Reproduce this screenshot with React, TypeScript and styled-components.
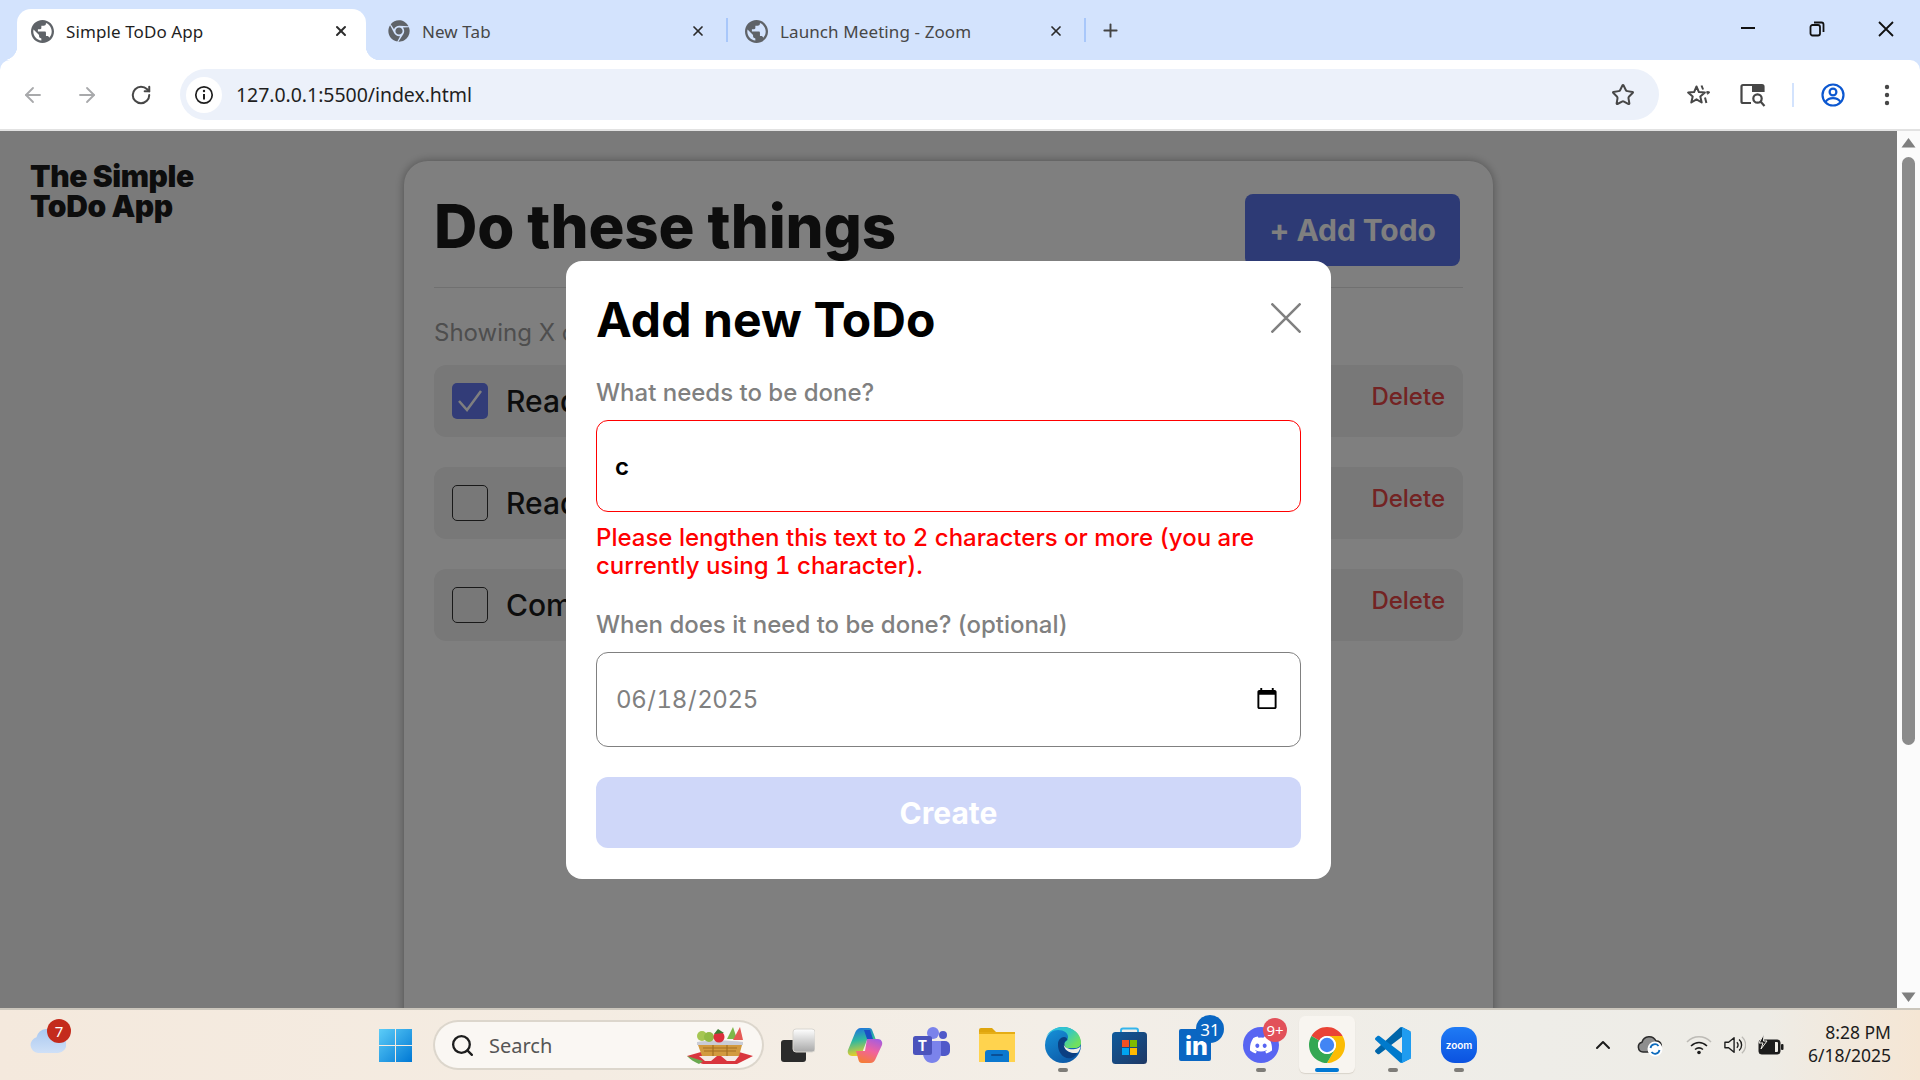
import React from "react";
import styled, { createGlobalStyle } from "styled-components";
import { ArrowLeft, ArrowRight, RotateCw, Star, X, Plus, Search as SearchGlass, ChevronUp } from "lucide-react";
import { FaChrome, FaDiscord } from "react-icons/fa";

const Global = createGlobalStyle`
  html, body { margin: 0; padding: 0; height: 100%; overflow: hidden; }
  * { box-sizing: border-box; }
  body { font-family: Inter, "Liberation Sans", sans-serif; background: #d3e3fd; }
`;

const Screen = styled.div`
  width: 1920px;
  height: 1080px;
  display: flex;
  flex-direction: column;
  overflow: hidden;
`;

/* ---------- browser chrome ---------- */
const TabStrip = styled.div`
  height: 60px;
  flex: none;
  display: flex;
  align-items: flex-end;
  padding-left: 17px;
  background: #d3e3fd;
  font-family: "Noto Sans", "Open Sans", sans-serif;
`;
const Tab = styled.div<{ $active?: boolean; $w: number; $l: number; $r: number }>`
  position: relative;
  flex: none;
  width: ${(p) => p.$w}px;
  height: 51px;
  display: flex;
  align-items: center;
  gap: 12px;
  padding: 0 ${(p) => p.$r}px 7px ${(p) => p.$l}px;
  background: ${(p) => (p.$active ? "#fff" : "transparent")};
  color: ${(p) => (p.$active ? "#1f1f1f" : "#474747")};
  border-radius: 14px 14px 0 0;
  ${(p) =>
    p.$active
      ? `
    &::before, &::after { content: ""; position: absolute; bottom: 0; width: 14px; height: 14px; }
    &::before { left: -14px; background: radial-gradient(circle at 0 0, transparent 14px, #fff 14.5px); }
    &::after { right: -14px; background: radial-gradient(circle at 100% 0, transparent 14px, #fff 14.5px); }
  `
      : ""}
`;
const TabTitle = styled.span`
  font-size: 17px;
  letter-spacing: 0.1px;
  white-space: nowrap;
`;
const TabClose = styled.span`
  margin-left: auto;
  display: flex;
  color: #2b2b2b;
`;
const TabSep = styled.div`
  flex: none;
  align-self: flex-start;
  margin-top: 18px;
  width: 2px;
  height: 24px;
  background: #a8c7fa;
`;
const NewTab = styled.div`
  flex: none;
  align-self: flex-start;
  width: 36px;
  height: 60px;
  margin-left: 6px;
  display: flex;
  align-items: center;
  justify-content: center;
  color: #444;
`;
const WinControls = styled.div`
  margin-left: auto;
  align-self: flex-start;
  display: flex;
`;
const WinButton = styled.div`
  width: 69px;
  height: 58px;
  display: flex;
  align-items: center;
  justify-content: center;
  color: #111;
`;
const Toolbar = styled.div`
  height: 71px;
  flex: none;
  display: flex;
  align-items: center;
  padding: 0 6px;
  background: #fff;
  border-bottom: 2px solid #e2e2e2;
  border-radius: 10px 10px 0 0;
`;
const ToolSlot = styled.div<{ $color?: string }>`
  flex: none;
  width: 54px;
  height: 51px;
  display: flex;
  align-items: center;
  justify-content: center;
  color: ${(p) => p.$color || "#474747"};
`;
const Omnibox = styled.div`
  flex: 1;
  height: 51px;
  margin: 0 13px 0 12px;
  display: flex;
  align-items: center;
  padding: 0 9px 0 6px;
  border-radius: 26px;
  background: #ecf1fa;
`;
const InfoBadge = styled.div`
  flex: none;
  width: 36px;
  height: 36px;
  border-radius: 50%;
  background: #fff;
  display: flex;
  align-items: center;
  justify-content: center;
`;
const Url = styled.span`
  margin-left: 14px;
  font-family: "Noto Sans", "Open Sans", sans-serif;
  font-size: 19.5px;
  letter-spacing: -0.05px;
  color: #1f1f1f;
`;
const OmniStar = styled.div`
  margin-left: auto;
  width: 54px;
  display: flex;
  justify-content: center;
  color: #474747;
`;
const ToolSep = styled.div`
  flex: none;
  width: 2px;
  height: 24px;
  margin: 0 12px;
  background: #d3e3fd;
`;

/* ---------- page ---------- */
const Viewport = styled.div`
  flex: 1;
  min-height: 0;
  display: flex;
  background: #fbfbfb;
`;
const Page = styled.div`
  position: relative;
  flex: 1;
  min-width: 0;
  display: flex;
  overflow: hidden;
  background: #f5f5f5;
`;
const Sidebar = styled.div`
  flex: none;
  width: 404px;
  padding: 30px 0 0 30px;
`;
const Logo = styled.div`
  font-size: 30px;
  line-height: 30px;
  font-weight: 900;
  letter-spacing: -0.4px;
  color: #1a1a1a;
`;
const Card = styled.div`
  flex: none;
  width: 1089px;
  height: 1000px;
  margin-top: 30px;
  padding: 33px 30px 0;
  background: #fff;
  border-radius: 24px;
  box-shadow: 0 0 10px rgba(0, 0, 0, 0.35);
`;
const CardHead = styled.div`
  display: flex;
  align-items: flex-start;
  justify-content: space-between;
  padding: 0 3px 21px 0;
  border-bottom: 1px solid #e0e0e0;
`;
const Heading = styled.h1`
  margin: -4px 0 0;
  font-size: 60px;
  line-height: 72px;
  font-weight: 800;
  letter-spacing: -0.1px;
  color: #1a1a1a;
`;
const AddButton = styled.button`
  height: 72px;
  width: 215px;
  border: 0;
  border-radius: 8px;
  background: #5a74ea;
  color: #fff;
  font: 700 30px Inter, sans-serif;
  letter-spacing: -0.1px;
`;
const Showing = styled.div`
  margin-top: 30px;
  font-size: 24px;
  line-height: 29px;
  color: #9c9c9c;
`;
const TodoList = styled.div`
  margin-top: 18px;
  display: flex;
  flex-direction: column;
  gap: 30px;
`;
const TodoRow = styled.div`
  height: 72px;
  display: flex;
  align-items: center;
  gap: 18px;
  padding: 0 18px;
  border-radius: 12px;
  background: #f0f0f0;
`;
const Check = styled.span<{ $checked?: boolean }>`
  flex: none;
  width: 36px;
  height: 36px;
  display: flex;
  align-items: center;
  justify-content: center;
  border-radius: 5px;
  border: ${(p) => (p.$checked ? "0" : "1.5px solid #333")};
  background: ${(p) => (p.$checked ? "#6478f0" : "transparent")};
  color: #fff;
`;
const TodoText = styled.span`
  font-size: 30px;
  font-weight: 500;
  color: #1a1a1a;
`;
const DeleteBtn = styled.span`
  margin-left: auto;
  margin-bottom: 10px;
  font-size: 24px;
  font-weight: 500;
  color: #e64646;
`;
const Overlay = styled.div`
  position: absolute;
  inset: 0;
  display: flex;
  align-items: center;
  justify-content: center;
  background: rgba(0, 0, 0, 0.5);
`;
const Modal = styled.div`
  width: 765px;
  height: 618px;
  padding: 30px;
  background: #fff;
  border-radius: 16px;
  display: flex;
  flex-direction: column;
`;
const ModalHead = styled.div`
  display: flex;
  align-items: flex-start;
  justify-content: space-between;
  height: 58px;
`;
const ModalTitle = styled.h2`
  margin: 0;
  font-size: 48px;
  line-height: 58px;
  font-weight: 700;
  letter-spacing: 0.1px;
  color: #000;
`;
const CloseIcon = styled.span`
  display: flex;
  margin-top: 12px;
`;
const FieldLabel = styled.label<{ $top: number }>`
  display: block;
  margin-top: ${(p) => p.$top}px;
  font-size: 24px;
  line-height: 29px;
  font-weight: 500;
  color: #808080;
`;
const TextField = styled.input`
  display: block;
  width: 100%;
  height: 93px;
  margin-top: 13px;
  padding: 1px 18px 0;
  border: 1px solid #f00;
  border-radius: 12px;
  outline: 0;
  background: #fff;
  font: 600 24px Inter, sans-serif;
  color: #000;
`;
const ErrorText = styled.div`
  margin-top: 12px;
  font-size: 24px;
  line-height: 28px;
  font-weight: 500;
  font-variant-numeric: tabular-nums;
  color: #f00;
`;
const DateField = styled.input`
  display: block;
  width: 100%;
  height: 95px;
  margin-top: 13px;
  padding: 0 19px 0 18px;
  border: 1px solid #808080;
  border-radius: 12px;
  outline: 0;
  background: #fff;
  font: 400 24px Inter, sans-serif;
  font-variant-numeric: tabular-nums;
  letter-spacing: -0.4px;
  color: #808080;
`;
const CreateBtn = styled.button`
  display: block;
  width: 100%;
  height: 72px;
  margin-top: 30px;
  border: 0;
  border-radius: 12px;
  background: #cfd7f9;
  color: #fff;
  font: 700 30px Inter, sans-serif;
`;
const Scrollbar = styled.div`
  flex: none;
  width: 23px;
  display: flex;
  flex-direction: column;
  align-items: center;
  padding: 6px 0 5px;
  background: #fbfbfb;
`;
const Thumb = styled.div`
  width: 13px;
  height: 588px;
  margin-top: 9px;
  border-radius: 7px;
  background: #8b8b8b;
`;
const ArrowDown = styled.span`
  display: flex;
  margin-top: auto;
`;
const ArrowUp = styled.span`
  display: flex;
`;

/* ---------- taskbar ---------- */
const Taskbar = styled.div`
  height: 72px;
  flex: none;
  display: flex;
  align-items: center;
  border-top: 2px solid #cbc6bc;
  background: linear-gradient(90deg, #f4e9dd 0%, #f4ece2 30%, #f3eee7 55%, #eeede8 80%, #eeece6 92%, #f5e6d4 100%);
`;
const WeatherArea = styled.div`
  flex: none;
  width: 362px;
  padding: 0 0 8px 30px;
`;
const Weather = styled.div`
  position: relative;
  width: 36px;
  height: 24px;
`;
const WeatherBadge = styled.span`
  position: absolute;
  top: -10px;
  left: 17px;
  width: 24px;
  height: 24px;
  border-radius: 50%;
  background: #c42b1c;
  color: #fff;
  font: 400 15px "Noto Sans", sans-serif;
  display: flex;
  align-items: center;
  justify-content: center;
`;
const TaskSlot = styled.div`
  position: relative;
  flex: none;
  width: 66px;
  height: 70px;
  display: flex;
  align-items: center;
  justify-content: center;
`;
const TaskViewSlot = styled(TaskSlot)`
  margin-right: 2px;
`;
const ActiveBg = styled.span`
  position: absolute;
  left: 5px;
  right: 5px;
  top: 6px;
  bottom: 7px;
  border-radius: 6px;
  background: #f8f5f0;
  box-shadow: 0 1px 1px #d8d3ca;
`;
const ActiveIcon = styled.span`
  position: relative;
  display: flex;
`;
const Indicator = styled.span<{ $active?: boolean }>`
  position: absolute;
  bottom: 8px;
  left: 50%;
  transform: translateX(-50%);
  width: ${(p) => (p.$active ? 24 : 10)}px;
  height: 4px;
  border-radius: 2px;
  background: ${(p) => (p.$active ? "#0078d4" : "#7e7c78")};
`;
const CountBadge = styled.span<{ $bg: string; $size: number; $top: number; $left: number; $font: number }>`
  position: absolute;
  top: ${(p) => p.$top}px;
  left: ${(p) => p.$left}px;
  width: ${(p) => p.$size}px;
  height: ${(p) => p.$size}px;
  border-radius: 50%;
  background: ${(p) => p.$bg};
  color: #fff;
  font: 400 ${(p) => p.$font}px "Noto Sans", sans-serif;
  display: flex;
  align-items: center;
  justify-content: center;
`;
const SearchBox = styled.div`
  flex: none;
  width: 327px;
  height: 46px;
  margin: 0 2px 0 7px;
  padding: 0 7px 0 15px;
  display: flex;
  align-items: center;
  border-radius: 23px;
  background: #faf7f3;
  box-shadow: 0 0 0 2px #dcd6cc;
  color: #1c1c1c;
`;
const SearchText = styled.span`
  margin-left: 14px;
  font: 400 20px "Noto Sans", sans-serif;
  color: #555;
`;
const Basket = styled.span`
  margin-left: auto;
  display: flex;
`;
const TrayArea = styled.div`
  margin-left: auto;
  display: flex;
  align-items: center;
  height: 70px;
`;
const TraySlot = styled.div<{ $w: number }>`
  flex: none;
  width: ${(p) => p.$w}px;
  display: flex;
  justify-content: center;
  color: #1c1c1c;
`;
const Clock = styled.div`
  width: 124px;
  padding: 0 29px 2px 0;
  text-align: right;
  font: 400 17.5px/23px "Noto Sans", sans-serif;
  color: #1c1c1c;
`;

/* ---------- icons ---------- */
const Globe = () => (
  <svg width="23" height="23" viewBox="2 2 20 20" fill="#5f6368">
    <path d="M12 2C6.48 2 2 6.48 2 12s4.48 10 10 10 10-4.48 10-10S17.52 2 12 2zm-1 17.93c-3.95-.49-7-3.85-7-7.93 0-.62.08-1.21.21-1.79L9 15v1c0 1.1.9 2 2 2v1.93zm6.9-2.54c-.26-.81-1-1.39-1.9-1.39h-1v-3c0-.55-.45-1-1-1H8v-2h2c.55 0 1-.45 1-1V7h2c1.1 0 2-.9 2-2v-.41c2.93 1.19 5 4.06 5 7.41 0 2.08-.8 3.97-2.1 5.39z" />
  </svg>
);
const Info = () => (
  <svg width="20" height="20" viewBox="0 0 20 20" fill="none" stroke="#1f1f1f" strokeWidth="1.7">
    <circle cx="10" cy="10" r="8.2" />
    <path d="M10 9v5.5" strokeWidth="2" />
    <circle cx="10" cy="6" r="1.2" fill="#1f1f1f" stroke="none" />
  </svg>
);
const BookmarkStars = () => (
  <svg width="26" height="26" viewBox="0 0 26 26" fill="none" stroke="#474747" strokeWidth="2" strokeLinejoin="round">
    <path d="M10.5 4.5l2.4 5.6 6 .5-4.6 4 1.4 5.9-5.2-3.2-5.2 3.2 1.4-5.9-4.6-4 6-.5z" />
    <path d="M15.5 3.5l1.6 4M21 12l2-1.7-2.6-.3M19 15.5l1.4 5.5" />
  </svg>
);
const TabSearch = () => (
  <svg width="28" height="26" viewBox="0 0 28 26" fill="none" stroke="#474747" strokeWidth="2.2">
    <path d="M12 21H4a1.5 1.5 0 0 1-1.5-1.5v-15A1.5 1.5 0 0 1 4 3h19a1.5 1.5 0 0 1 1.5 1.5V10" />
    <rect x="13" y="3" width="11.5" height="7" fill="#474747" stroke="none" />
    <circle cx="18.5" cy="16.5" r="4.2" />
    <path d="M21.5 19.5l4 4.5" />
  </svg>
);
const Profile = () => (
  <svg width="24" height="26" viewBox="0 0 24 26" fill="none" stroke="#0b57d0" strokeWidth="2.2">
    <circle cx="12" cy="13" r="10.5" />
    <circle cx="12" cy="10" r="3.4" />
    <path d="M4.5 20c2-3 5-3.8 7.5-3.8S17.500 17 19.500 20" />
  </svg>
);
const Dots = () => (
  <svg width="6" height="22" viewBox="0 0 6 22" fill="#474747">
    <circle cx="3" cy="3" r="2.2" />
    <circle cx="3" cy="11" r="2.2" />
    <circle cx="3" cy="19" r="2.2" />
  </svg>
);
const Minimize = () => (
  <svg width="16" height="16" viewBox="0 0 16 16"><path d="M1 7h14" stroke="#111" strokeWidth="2" /></svg>
);
const Restore = () => (
  <svg width="16" height="16" viewBox="0 0 16 16" fill="none" stroke="#111" strokeWidth="1.8">
    <rect x="1.500" y="4" width="9.500" height="10.500" rx="2" />
    <path d="M5 1.500h7.500a2 2 0 0 1 2 2V11" />
  </svg>
);
const WinClose = () => (
  <svg width="16" height="16" viewBox="0 0 16 16"><path d="M1 1l14 14M15 1L1 15" stroke="#111" strokeWidth="1.800" /></svg>
);
const Cloud = () => (
  <svg width="36" height="24" viewBox="0 0 36 24">
    <defs>
      <linearGradient id="wc" x1="0" y1="0" x2="0" y2="1">
        <stop offset="0" stopColor="#a9c8f0" />
        <stop offset="1" stopColor="#cfe0f7" />
      </linearGradient>
    </defs>
    <path d="M8 24a8 8 0 0 1-1.500-15.700A11 11 0 0 1 27 6a9 9 0 0 1 1 18z" fill="url(#wc)" />
  </svg>
);
const WinLogo = () => (
  <svg width="35" height="35" viewBox="0 0 35 35">
    <defs>
      <linearGradient id="wl" x1="0" y1="0" x2="1" y2="1">
        <stop offset="0" stopColor="#5ccdf8" />
        <stop offset="1" stopColor="#0078d4" />
      </linearGradient>
    </defs>
    <path d="M1 1h16v16H1zM18 1h16v16H18zM1 18h16v16H1zM18 18h16v16H18z" fill="url(#wl)" />
  </svg>
);
const Picnic = () => (
  <svg width="70" height="38" viewBox="0 0 70 38">
    <path d="M2 30l14-4h38l14 4-12 6-4 2H18l-6-2z" fill="#d9363e" />
    <path d="M2 30c3 3 7 6 12 8l4-3z" fill="#6aa84f" />
    <path d="M14 30l6 5h6l6-5zM36 30l6 5h8l4-5z" fill="#f5e9e4" />
    <path d="M12 16c12-2 32-2 46 0v3H12z" fill="#c9ccd6" />
    <circle cx="17" cy="10" r="5" fill="#a5c653" />
    <circle cx="24" cy="11" r="5" fill="#92ba46" />
    <circle cx="34" cy="11" r="5.500" fill="#dd2e3c" />
    <path d="M29 8l4-5 6 4z" fill="#3c7d33" />
    <path d="M42 13l6-12 4 12z" fill="#7db84a" />
    <path d="M48 14L55 1l3 13z" fill="#e55a55" />
    <path d="M13 19h44l-3 11H17z" fill="#d29a3f" />
    <path d="M18 22h34M19 25h32M28 19v11M42 19v11" stroke="#a36f22" strokeWidth="1.200" />
  </svg>
);
const TaskView = () => (
  <svg width="35" height="35" viewBox="0 0 35 35">
    <defs>
      <linearGradient id="tv" x1="0" y1="0" x2="0" y2="1">
        <stop offset="0" stopColor="#ffffff" />
        <stop offset="1" stopColor="#a8a8a8" />
      </linearGradient>
    </defs>
    <rect x="1" y="12" width="25" height="22" rx="3" fill="#2b2b2b" />
    <rect x="13" y="1" width="22" height="23" rx="3" fill="url(#tv)" stroke="#d9d6d0" />
  </svg>
);
const Copilot = () => (
  <svg width="36" height="36" viewBox="0 0 36 36">
    <defs>
      <linearGradient id="cp1" x1="0.2" y1="0" x2="0.4" y2="1">
        <stop offset="0" stopColor="#1e6fe0" />
        <stop offset="0.45" stopColor="#2fb8a0" />
        <stop offset="1" stopColor="#f5d020" />
      </linearGradient>
      <linearGradient id="cp2" x1="0.8" y1="0" x2="0.4" y2="1">
        <stop offset="0" stopColor="#a45de0" />
        <stop offset="0.5" stopColor="#f062a0" />
        <stop offset="1" stopColor="#f57c3a" />
      </linearGradient>
    </defs>
    <path d="M14 1h8c2 0 3 1 3.500 3L29 13h-9l-5 13c-1 2-2 3-4 3H5c-3 0-5-3-4-6l7-17c1-3 3-5 6-5z" fill="url(#cp1)" />
    <path d="M20 12h11c3 0 5 3 4 6l-6 13c-1 3-3 5-6 5h-8c-2 0-3-1-3.500-3L9 24h9z" fill="url(#cp2)" />
    <path d="M17 3h6l3 9h-6z" fill="#1a4fc4" />
  </svg>
);
const Teams = () => (
  <svg width="37" height="36" viewBox="0 0 37 36">
    <circle cx="30" cy="8" r="4" fill="#5059c9" />
    <rect x="24" y="14" width="13" height="15" rx="5" fill="#5059c9" />
    <circle cx="20" cy="6" r="6" fill="#7b83eb" />
    <path d="M10 14h18v12c0 6-4 10-9 10s-9-4-9-10z" fill="#7b83eb" />
    <rect x="0" y="9" width="19" height="19" rx="2.500" fill="#4b53bc" />
    <text x="9.500" y="24" textAnchor="middle" fontFamily="Inter, sans-serif" fontWeight="700" fontSize="14" fill="#fff">T</text>
  </svg>
);
const Folder = () => (
  <svg width="36" height="34" viewBox="0 0 36 34">
    <path d="M0 2a2 2 0 0 1 2-2h11l4 4h17a2 2 0 0 1 2 2v3H0z" fill="#dfa50d" />
    <path d="M0 4h36v30H0z" fill="#ffd34e" />
    <path d="M0 4h14l3-0h19v2H0z" fill="#e5ad16" />
    <path d="M6 34v-9a3 3 0 0 1 3-3h18a3 3 0 0 1 3 3v9z" fill="#0b78cf" />
    <rect x="12" y="26" width="12" height="2" rx="1" fill="#0a4f96" />
  </svg>
);
const Edge = () => (
  <svg width="36" height="36" viewBox="0 0 36 36">
    <defs>
      <linearGradient id="eg" x1="0.1" y1="0" x2="1" y2="0.6">
        <stop offset="0" stopColor="#2cc0e8" />
        <stop offset="0.55" stopColor="#35c8c0" />
        <stop offset="1" stopColor="#70e060" />
      </linearGradient>
      <linearGradient id="eb" x1="0" y1="0" x2="0.6" y2="1">
        <stop offset="0" stopColor="#1795dc" />
        <stop offset="1" stopColor="#0c5aa8" />
      </linearGradient>
    </defs>
    <circle cx="18" cy="18" r="18" fill="url(#eb)" />
    <path d="M18 0c10 0 18 7 18 15.500 0 3-2 5.500-6 5.500H17c0-5 6-7 6-11C23 6 19 3 13 3 8 3 3 6 1 11 3 4 10 0 18 0z" fill="url(#eg)" />
    <path d="M13 17c0-4 3-7 6-7 2 0 3 1 3.500 3-3 1-4 4-2 7 3 4 8 4 13 3-1 4-4 7-7 8-8 2-14-6-13.500-14z" fill="#0b3f82" />
    <path d="M19 18c1 3 6 5 11 4 2-.4 4-1 5.500-2.500-.5 3-1.500 4.500-2.500 6-5 1.500-11-.5-13-4-.6-1.200-1.500-2.500-1-3.500z" fill="#f3eee7" />
  </svg>
);
const Store = () => (
  <svg width="35" height="37" viewBox="0 0 35 37">
    <defs>
      <linearGradient id="st" x1="0" y1="0" x2="1" y2="1">
        <stop offset="0" stopColor="#0f5a9c" />
        <stop offset="1" stopColor="#1f3864" />
      </linearGradient>
    </defs>
    <path d="M9 9V3.500A2 2 0 0 1 11 1.500h13a2 2 0 0 1 2 2V9" fill="none" stroke="#35b5ec" strokeWidth="2" />
    <rect x="0" y="5" width="35" height="32" rx="3.500" fill="url(#st)" />
    <rect x="10" y="13" width="7" height="7" fill="#f25022" />
    <rect x="18" y="13" width="7" height="7" fill="#7fba00" />
    <rect x="10" y="21" width="7" height="7" fill="#00a4ef" />
    <rect x="18" y="21" width="7" height="7" fill="#ffb900" />
  </svg>
);
const LinkedIn = () => (
  <svg width="32" height="32" viewBox="0 0 32 32">
    <rect width="32" height="32" rx="2" fill="#0a66c2" />
    <text x="6" y="26" fontFamily="Inter, sans-serif" fontWeight="800" fontSize="25" fill="#fff">in</text>
  </svg>
);
const DiscordIcon = styled.span`
  width: 36px;
  height: 36px;
  border-radius: 50%;
  background: #5865f2;
  color: #fff;
  display: flex;
  align-items: center;
  justify-content: center;
`;
const ChromeLogo = () => (
  <svg width="36" height="36" viewBox="4 4 40 40">
    <path d="M6.680 14A20 20 0 0 1 41.320 14H24A10 10 0 0 0 15.340 19z" fill="#ea4335" />
    <path d="M41.320 14A20 20 0 0 1 24 44L32.660 29A10 10 0 0 0 24 14z" fill="#fbbc04" />
    <path d="M24 44A20 20 0 0 1 6.680 14L15.340 19A10 10 0 0 0 32.660 29z" fill="#34a853" />
    <circle cx="24" cy="24" r="10" fill="#fff" />
    <circle cx="24" cy="24" r="8" fill="#4285f4" />
  </svg>
);
const VSCode = () => (
  <svg width="36" height="36" viewBox="0 0 100 100">
    <path d="M96.500 10.800 75.900.9c-2.400-1.200-5.200-.7-7.100 1.200L1.400 63.600c-1.800 1.700-1.800 4.500 0 6.200l5.500 5c1.500 1.300 3.700 1.400 5.300.2L93.400 13.200c2.700-2 6.600-.1 6.600 3.300v-.2c0-2.400-1.400-4.600-3.500-5.500z" fill="#0065a9" />
    <path d="M96.500 89.200 75.900 99.100c-2.400 1.200-5.200.7-7.100-1.200L1.400 36.400c-1.800-1.700-1.800-4.500 0-6.200l5.500-5c1.500-1.300 3.700-1.400 5.300-.2l81.200 61.800c2.700 2 6.600.1 6.600-3.300v.2c0 2.400-1.400 4.600-3.500 5.500z" fill="#007acc" />
    <path d="M75.900 99.100c-2.400 1.200-5.200.6-7.100-1.200 2.300 2.300 6.200.7 6.200-2.600V4.700c0-3.300-3.900-4.900-6.200-2.600 1.900-1.900 4.700-2.400 7.100-1.200l20.600 9.900c2.100 1 3.500 3.200 3.500 5.600v67.200c0 2.400-1.400 4.600-3.500 5.600z" fill="#1f9cf0" />
  </svg>
);
const ZoomIcon = styled.span`
  width: 36px;
  height: 36px;
  border-radius: 14px;
  background: linear-gradient(180deg, #1f7bf5, #0b52e0);
  color: #fff;
  font: 600 10px Inter, sans-serif;
  display: flex;
  align-items: center;
  justify-content: center;
`;
const OneDrive = () => (
  <svg width="26" height="24" viewBox="0 0 26 24">
    <path d="M6 19a5 5 0 0 1-1-9.800A7.500 7.500 0 0 1 19 8a5 5 0 0 1 2 9.700V19z" fill="#8e8e8e" stroke="#2b2b2b" strokeWidth="1.500" />
    <circle cx="18" cy="16" r="7.500" fill="#fff" />
    <path d="M13.500 15a4.500 4.500 0 0 1 8-2M22.500 17a4.500 4.500 0 0 1-8 2" fill="none" stroke="#0f6cbd" strokeWidth="1.800" />
  </svg>
);
const Wifi = () => (
  <svg width="26" height="20" viewBox="0 0 26 20" fill="none" stroke="#1c1c1c" strokeWidth="1.600">
    <path d="M1 7c7-7 17-7 24 0" stroke="#bdbbb6" />
    <path d="M5 11c5-4.500 11-4.500 16 0" />
    <path d="M9 14.500c2.500-2 5.500-2 8 0" />
    <circle cx="13" cy="17.500" r="1.800" fill="#1c1c1c" stroke="none" />
  </svg>
);
const Speaker = () => (
  <svg width="24" height="22" viewBox="0 0 24 22" fill="none" stroke="#1c1c1c" strokeWidth="1.500">
    <path d="M1 8v6h4l6 5V3L5 8z" strokeLinejoin="round" />
    <path d="M14 8a4 4 0 0 1 0 6M16.500 5a8 8 0 0 1 0 12" />
    <path d="M19.500 2a12 12 0 0 1 0 18" stroke="#bdbbb6" />
  </svg>
);
const Battery = () => (
  <svg width="26" height="22" viewBox="0 0 26 22">
    <rect x="1" y="6" width="21" height="14" rx="2.500" fill="#1c1c1c" stroke="#1c1c1c" />
    <rect x="3" y="8" width="17" height="10" rx="1" fill="#f0eee8" />
    <rect x="3" y="8" width="14" height="10" fill="#1c1c1c" />
    <rect x="23" y="10" width="2.500" height="6" rx="1" fill="#1c1c1c" />
    <path d="M6 0L1 9h4l-2 6 6-8H5.500z" fill="#1c1c1c" stroke="#f0eee8" strokeWidth="1" />
  </svg>
);

const todos = [
  { text: "Read a book", done: true },
  { text: "Read the docs", done: false },
  { text: "Complete the app", done: false },
];

export default function App() {
  return (
    <Screen>
      <Global />
      <TabStrip>
        <Tab $active $w={349} $l={14} $r={17}>
          <Globe />
          <TabTitle>Simple ToDo App</TabTitle>
          <TabClose><X size={16} strokeWidth={3} /></TabClose>
        </Tab>
        <Tab $w={360} $l={22} $r={20}>
          <FaChrome size={22} color="#5f6368" />
          <TabTitle>New Tab</TabTitle>
          <TabClose><X size={16} strokeWidth={2.6} /></TabClose>
        </Tab>
        <TabSep />
        <Tab $w={356} $l={17} $r={20}>
          <Globe />
          <TabTitle>Launch Meeting - Zoom</TabTitle>
          <TabClose><X size={16} strokeWidth={2.6} /></TabClose>
        </Tab>
        <TabSep />
        <NewTab><Plus size={21} strokeWidth={2.2} /></NewTab>
        <WinControls>
          <WinButton><Minimize /></WinButton>
          <WinButton><Restore /></WinButton>
          <WinButton><WinClose /></WinButton>
        </WinControls>
      </TabStrip>
      <Toolbar>
        <ToolSlot $color="#a8a9ab"><ArrowLeft size={24} strokeWidth={1.8} /></ToolSlot>
        <ToolSlot $color="#a8a9ab"><ArrowRight size={24} strokeWidth={1.8} /></ToolSlot>
        <ToolSlot><RotateCw size={22} strokeWidth={2.2} /></ToolSlot>
        <Omnibox>
          <InfoBadge><Info /></InfoBadge>
          <Url>127.0.0.1:5500/index.html</Url>
          <OmniStar><Star size={24} strokeWidth={2} /></OmniStar>
        </Omnibox>
        <ToolSlot><BookmarkStars /></ToolSlot>
        <ToolSlot><TabSearch /></ToolSlot>
        <ToolSep />
        <ToolSlot><Profile /></ToolSlot>
        <ToolSlot><Dots /></ToolSlot>
      </Toolbar>
      <Viewport>
        <Page>
          <Sidebar>
            <Logo>The Simple<br />ToDo App</Logo>
          </Sidebar>
          <Card>
            <CardHead>
              <Heading>Do these things</Heading>
              <AddButton>+ Add Todo</AddButton>
            </CardHead>
            <Showing>Showing X of Y todos</Showing>
            <TodoList>
              {todos.map((t) => (
                <TodoRow key={t.text}>
                  <Check $checked={t.done}>
                    {t.done && (
                      <svg width="28" height="24" viewBox="0 0 28 24" fill="none" stroke="currentColor" strokeWidth="2.500"><path d="M3 12l8 9L25 2" /></svg>
                    )}
                  </Check>
                  <TodoText>{t.text}</TodoText>
                  <DeleteBtn>Delete</DeleteBtn>
                </TodoRow>
              ))}
            </TodoList>
          </Card>
          <Overlay>
            <Modal>
              <ModalHead>
                <ModalTitle>Add new ToDo</ModalTitle>
                <CloseIcon>
                  <svg width="30" height="30" viewBox="0 0 30 30"><path d="M0.500 0.500l29 29M29.500 0.500l-29 29" stroke="#808080" strokeWidth="2.500" /></svg>
                </CloseIcon>
              </ModalHead>
              <FieldLabel $top={29}>What needs to be done?</FieldLabel>
              <TextField value="c" readOnly />
              <ErrorText>Please lengthen this text to 2 characters or more (you are currently using 1 character).</ErrorText>
              <FieldLabel $top={30}>When does it need to be done? (optional)</FieldLabel>
              <DateField type="date" defaultValue="2025-06-18" />
              <CreateBtn>Create</CreateBtn>
            </Modal>
          </Overlay>
        </Page>
        <Scrollbar>
          <ArrowUp><svg width="15" height="11" viewBox="0 0 15 11"><path d="M7.500 1L14.500 10.500H0.500z" fill="#7f7f7f" /></svg></ArrowUp>
          <Thumb />
          <ArrowDown><svg width="15" height="11" viewBox="0 0 15 11"><path d="M7.500 10L14.500 0.500H0.500z" fill="#7f7f7f" /></svg></ArrowDown>
        </Scrollbar>
      </Viewport>
      <Taskbar>
        <WeatherArea>
          <Weather><Cloud /><WeatherBadge>7</WeatherBadge></Weather>
        </WeatherArea>
        <TaskSlot><WinLogo /></TaskSlot>
        <SearchBox>
          <SearchGlass size={25} strokeWidth={2.2} />
          <SearchText>Search</SearchText>
          <Basket><Picnic /></Basket>
        </SearchBox>
        <TaskViewSlot><TaskView /></TaskViewSlot>
        <TaskSlot><Copilot /></TaskSlot>
        <TaskSlot><Teams /></TaskSlot>
        <TaskSlot><Folder /></TaskSlot>
        <TaskSlot><Edge /><Indicator /></TaskSlot>
        <TaskSlot><Store /></TaskSlot>
        <TaskSlot>
          <LinkedIn />
          <CountBadge $bg="#0a66c2" $size={28} $top={5} $left={34} $font={17}>31</CountBadge>
        </TaskSlot>
        <TaskSlot>
          <DiscordIcon><FaDiscord size={24} /></DiscordIcon>
          <CountBadge $bg="#e2515a" $size={24} $top={8} $left={35} $font={15}>9+</CountBadge>
          <Indicator />
        </TaskSlot>
        <TaskSlot>
          <ActiveBg />
          <ActiveIcon><ChromeLogo /></ActiveIcon>
          <Indicator $active />
        </TaskSlot>
        <TaskSlot><VSCode /><Indicator /></TaskSlot>
        <TaskSlot><ZoomIcon>zoom</ZoomIcon><Indicator /></TaskSlot>
        <TrayArea>
          <TraySlot $w={46}><ChevronUp size={24} strokeWidth={2} /></TraySlot>
          <TraySlot $w={48}><OneDrive /></TraySlot>
          <TraySlot $w={50}><Wifi /></TraySlot>
          <TraySlot $w={22}><Speaker /></TraySlot>
          <TraySlot $w={50}><Battery /></TraySlot>
          <Clock>8:28 PM<br />6/18/2025</Clock>
        </TrayArea>
      </Taskbar>
    </Screen>
  );
}
